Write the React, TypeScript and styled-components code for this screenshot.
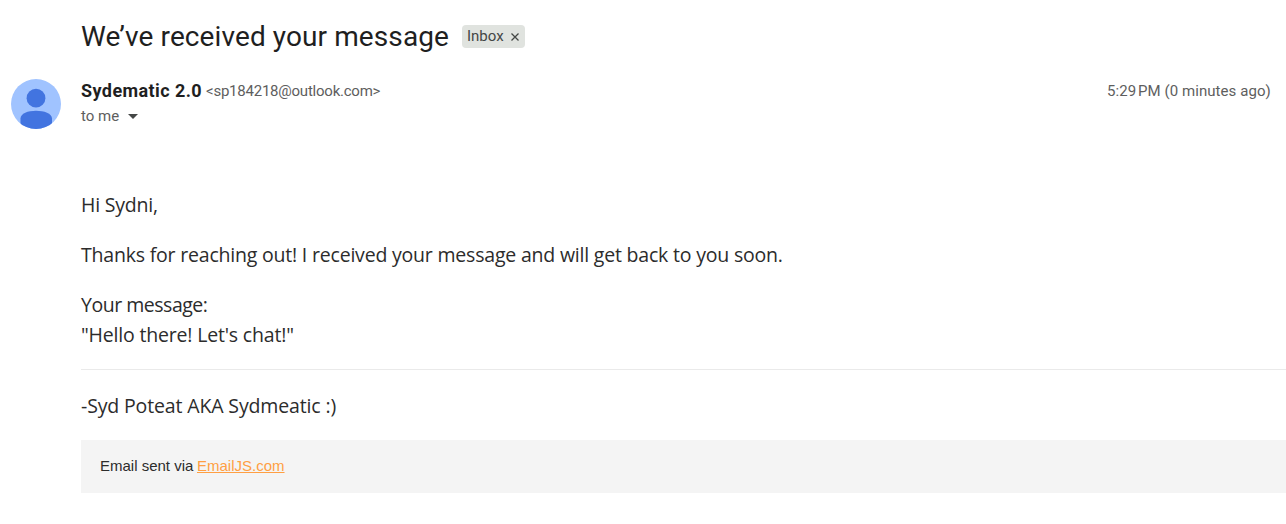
import React from "react";
import styled, { createGlobalStyle } from "styled-components";

const Global = createGlobalStyle`
  * { box-sizing: border-box; }
  body { margin: 0; background: #fff; overflow: hidden; }
`;

const Page = styled.main`
  width: 1286px;
  height: 524px;
  overflow: hidden;
  padding-left: 11px;
  background: #fff;
  font-family: Roboto, "Liberation Sans", sans-serif;
`;

const Fit = styled.span<{ $w: number; $size: number; $spacing?: number; $color?: string; $weight?: number }>`
  display: inline-block;
  vertical-align: top;
  width: ${(p) => p.$w}px;
  flex: none;
  white-space: nowrap;
  font-size: ${(p) => p.$size}px;
  letter-spacing: ${(p) => p.$spacing ?? 0}px;
  color: ${(p) => p.$color ?? "inherit"};
  font-weight: ${(p) => p.$weight ?? 400};
`;

const SubjectRow = styled.header`
  display: flex;
  align-items: center;
  gap: 13px;
  height: 60px;
  margin-left: 70px;
  padding-top: 12px;
  color: #1f1f1f;
`;

const Subject = styled.h1`
  display: flex;
  margin: 0;
  padding-top: 2px;
  line-height: 36px;
  font-weight: 400;
`;

const Label = styled.div`
  display: flex;
  align-items: center;
  width: 63px;
  height: 23px;
  padding-left: 5px;
  gap: 7px;
  border-radius: 4px;
  background: #e0e3df;
  color: #444746;

  svg { margin-top: 2px; }
`;

const SenderRow = styled.section`
  display: flex;
  height: 67px;
  padding: 19px 15px 0 0;
`;

const Avatar = styled.svg`
  width: 50px;
  height: 50px;
  flex: none;
`;

const Sender = styled.div`
  flex: 1;
  margin-left: 20px;
`;

const Line = styled.div`
  display: flex;
  align-items: center;
  gap: 4px;
  height: 25px;
  line-height: 25px;
  color: #5e5e5e;
`;

const SenderName = styled.div`
  display: flex;
  line-height: 24px;
  height: 25px;
`;

const Recipient = styled(Line)`
  gap: 9px;
`;

const Body = styled.article`
  margin: 63px 0 0 70px;
  font-family: "Open Sans", "Noto Sans", sans-serif;
  line-height: 30px;
  color: #2c2c2c;
`;

const Paragraph = styled.p`
  margin: 0 0 20px;
`;

const Rule = styled.hr`
  margin: -1px 0 21px;
  border: 0;
  border-top: 1px solid #eaeaea;
`;

const Footer = styled.footer`
  display: flex;
  align-items: center;
  height: 53px;
  margin-top: -1px;
  padding: 0 0 2px 19px;
  gap: 3px;
  background: #f4f4f4;
  font-family: "Liberation Sans", sans-serif;
`;

const Link = styled.a`
  display: flex;

  span {
    color: #ff9f43;
    text-decoration: underline;
  }
`;

export default function App() {
  return (
    <Page>
      <Global />
      <SubjectRow>
        <Subject><Fit $w={368} $size={28} $spacing={0.1}>We’ve received your message</Fit></Subject>
        <Label>
          <Fit $w={37} $size={15}>Inbox</Fit>
          <svg width="8" height="8" viewBox="0 0 8 8"><path d="m.5.5 7 7m0-7-7 7" stroke="#444746" strokeWidth="1.25" /></svg>
        </Label>
      </SubjectRow>
      <SenderRow>
        <Avatar viewBox="0 0 50 50">
          <defs><clipPath id="disc"><circle cx="25" cy="25" r="25" /></clipPath></defs>
          <g clipPath="url(#disc)">
            <rect width="50" height="50" fill="#a0c3ff" />
            <circle cx="25" cy="19.200" r="9.400" fill="#4274e0" />
            <path d="M9.500 50V39.500C9.500 34.500 17 31.800 25 31.800S41 34.500 41 39.500V50Z" fill="#4274e0" />
          </g>
        </Avatar>
        <Sender>
          <Line>
            <SenderName><Fit $w={121} $size={18} $spacing={0.41} $weight={700} $color="#1f1f1f">Sydematic 2.0</Fit></SenderName>
            <Fit $w={175} $size={15} $spacing={-0.23}>&lt;sp184218@outlook.com&gt;</Fit>
          </Line>
          <Recipient>
            <Fit $w={38} $size={15}>to me</Fit>
            <svg width="10" height="5" viewBox="0 0 10 5"><path d="M0 0h10L5 5Z" fill="#444746" /></svg>
          </Recipient>
        </Sender>
        <Line><Fit $w={164} $size={15} $spacing={0.06}>5:29{"\u202f"}PM (0 minutes ago)</Fit></Line>
      </SenderRow>
      <Body>
        <Paragraph><Fit $w={77} $size={19.5} $spacing={-0.2}>Hi Sydni,</Fit></Paragraph>
        <Paragraph><Fit $w={702} $size={19.5} $spacing={-0.2}>Thanks for reaching out! I received your message and will get back to you soon.</Fit></Paragraph>
        <Paragraph>
          <Fit $w={127} $size={19.5} $spacing={-0.48}>Your message:</Fit><br />
          <Fit $w={213} $size={19.5} $spacing={-0.18}>"Hello there! Let's chat!"</Fit>
        </Paragraph>
        <Rule />
        <Paragraph><Fit $w={256} $size={19.5} $spacing={-0.14}>-Syd Poteat AKA Sydmeatic :)</Fit></Paragraph>
        <Footer>
          <Fit $w={94} $size={15}>Email sent via</Fit>
          <Link><Fit $w={88} $size={15}>EmailJS.com</Fit></Link>
        </Footer>
      </Body>
    </Page>
  );
}
